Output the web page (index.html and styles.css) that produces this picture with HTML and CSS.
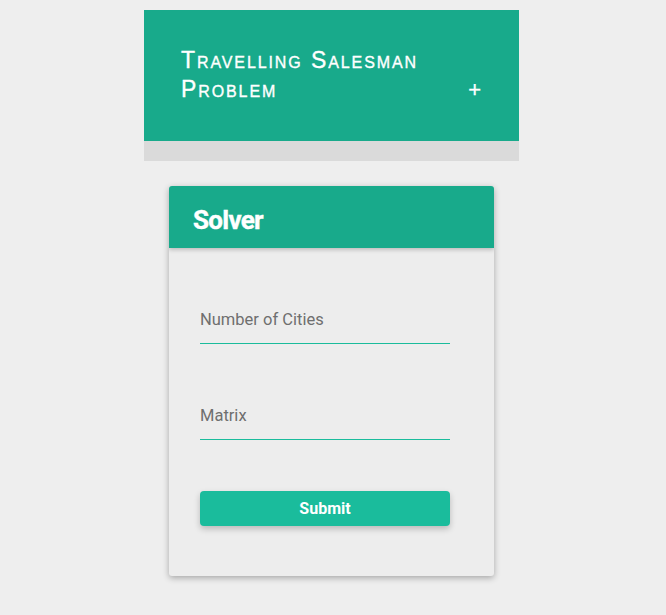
FILE: index.html
```html
<!DOCTYPE html>
<html lang="en">
<head>
<meta charset="utf-8">
<title>Travelling Salesman Problem</title>
<link rel="stylesheet" href="styles.css">
</head>
<body>
  <div class="page">
    <header class="banner">
      <h1 class="banner-title">Travelling Salesman Problem</h1>
      <span class="banner-toggle">+</span>
    </header>
    <div class="banner-strip"></div>
    <section class="card">
      <div class="card-head">
        <h2 class="card-title">Solver</h2>
      </div>
      <form class="card-body">
        <div class="field">
          <input class="field-input" type="text" placeholder="Number of Cities">
        </div>
        <div class="field field-second">
          <input class="field-input" type="text" placeholder="Matrix">
        </div>
        <button class="submit" type="button">Submit</button>
      </form>
    </section>
  </div>
</body>
</html>
```
FILE: styles.css
```css
html, body {
  margin: 0;
  padding: 0;
  background: #eeeeee;
}

.page {
  width: 375px;
  margin: 10px 0 0 144px;
  padding-bottom: 39px;
  display: flex;
  flex-direction: column;
}

.banner {
  height: 131px;
  box-sizing: border-box;
  background: #18aa8b;
  display: flex;
  align-items: flex-start;
  padding: 36px 38px 0 37px;
}

.banner-title {
  margin: 0;
  width: 280px;
  font-family: "Liberation Sans", Arial, sans-serif;
  font-variant: small-caps;
  font-weight: normal;
  font-size: 23px;
  letter-spacing: 1.9px;
  line-height: 29px;
  color: #ffffff;
  -webkit-text-stroke: 0.35px #ffffff;
}

.banner-toggle {
  margin-left: auto;
  margin-top: 29px;
  font-family: "Liberation Sans", Arial, sans-serif;
  font-size: 22px;
  line-height: 29px;
  color: #ffffff;
  -webkit-text-stroke: 0.3px #ffffff;
}

.banner-strip {
  height: 20px;
  background: #dadada;
}

.card {
  width: 325px;
  margin: 25px auto 0;
  background: #ededed;
  border-radius: 3px;
  box-shadow: 0 2px 6px rgba(0, 0, 0, 0.3);
  overflow: hidden;
}

.card-head {
  height: 62px;
  box-sizing: border-box;
  background: #18aa8b;
  display: flex;
  align-items: center;
  padding: 6px 0 0 24px;
  box-shadow: 0 2px 4px rgba(0, 0, 0, 0.2);
  position: relative;
}

.card-title {
  margin: 0;
  font-family: Roboto, "Liberation Sans", sans-serif;
  font-weight: 700;
  font-size: 26px;
  letter-spacing: -0.7px;
  color: #ffffff;
  -webkit-text-stroke: 0.4px #ffffff;
}

.card-body {
  display: flex;
  flex-direction: column;
  padding: 62px 44px 50px 31px;
  margin: 0;
}

.field {
  width: 250px;
  padding-bottom: 13px;
  border-bottom: 1px solid #1abc9c;
}

.field-input {
  display: block;
  width: 100%;
  box-sizing: border-box;
  height: 20px;
  padding: 0;
  margin: 0;
  border: none;
  background: transparent;
  font-family: Roboto, "Liberation Sans", sans-serif;
  font-size: 16.5px;
  line-height: 20px;
  color: #555555;
  outline: none;
}

.field-input::placeholder {
  color: #6f6f6f;
  opacity: 1;
}

.field-second {
  margin-top: 62px;
}

.submit {
  margin-top: 51px;
  width: 250px;
  height: 35px;
  border: none;
  border-radius: 4px;
  background: #1abc9c;
  color: #ffffff;
  font-family: Roboto, "Liberation Sans", sans-serif;
  font-weight: 700;
  font-size: 16px;
  box-shadow: 0 3px 6px rgba(0, 0, 0, 0.22);
  padding: 0;
}
```
